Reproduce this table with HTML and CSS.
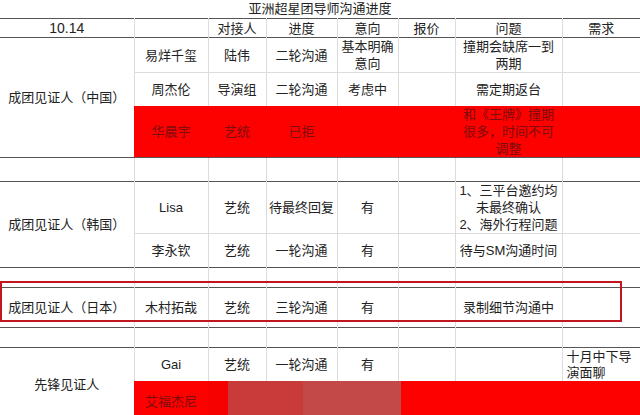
FILE: index.html
```html
<!DOCTYPE html>
<html lang="zh">
<head>
<meta charset="utf-8">
<title>亚洲超星团导师沟通进度</title>
<link rel="stylesheet" href="styles.css">
</head>
<body>
<div class="sheet">
  <div class="title">亚洲超星团导师沟通进度</div>
  <table class="grid">
    <colgroup>
      <col class="w1"><col class="w2"><col class="w3"><col class="w4"><col class="w5"><col class="w6"><col class="w7"><col class="w8">
    </colgroup>
    <tr class="dark r-head">
      <td class="g date">10.14</td><td></td><td>对接人</td><td>进度</td><td>意向</td><td>报价</td><td>问题</td><td>需求</td>
    </tr>
    <tr class="dark r35">
      <td class="g" rowspan="3">成团见证人（中国）</td>
      <td>易烊千玺</td><td>陆伟</td><td>二轮沟通</td><td>基本明确<br>意向</td><td></td><td>撞期会缺席一到<br>两期</td><td></td>
    </tr>
    <tr class="light r34">
      <td>周杰伦</td><td>导演组</td><td>二轮沟通</td><td>考虑中</td><td></td><td>需定期返台</td><td></td>
    </tr>
    <tr class="red r51">
      <td>华晨宇</td><td>艺统</td><td>已拒</td><td></td><td></td><td>和《王牌》撞期<br>很多，时间不可<br>调整</td><td></td>
    </tr>
    <tr class="dark r24">
      <td class="g"></td><td></td><td></td><td></td><td></td><td></td><td></td><td></td>
    </tr>
    <tr class="dark r51">
      <td class="g" rowspan="2">成团见证人（韩国）</td>
      <td>Lisa</td><td>艺统</td><td>待最终回复</td><td>有</td><td></td><td>1、三平台邀约均<br>未最终确认<br>2、海外行程问题</td><td></td>
    </tr>
    <tr class="light r34">
      <td>李永钦</td><td>艺统</td><td>一轮沟通</td><td>有</td><td></td><td>待与SM沟通时间</td><td></td>
    </tr>
    <tr class="dark r20">
      <td class="g"></td><td></td><td></td><td></td><td></td><td></td><td></td><td></td>
    </tr>
    <tr class="dark r40">
      <td class="g">成团见证人（日本）</td>
      <td>木村拓哉</td><td>艺统</td><td>三轮沟通</td><td>有</td><td></td><td>录制细节沟通中</td><td></td>
    </tr>
    <tr class="dark r20">
      <td class="g"></td><td></td><td></td><td></td><td></td><td></td><td></td><td></td>
    </tr>
    <tr class="dark r34">
      <td class="g" rowspan="2">先锋见证人</td>
      <td>Gai</td><td>艺统</td><td>一轮沟通</td><td>有</td><td></td><td></td><td class="note">十月中下导<br>演面聊</td>
    </tr>
    <tr class="red r35">
      <td>艾福杰尼</td>
      <td class="blur" colspan="6"><div class="mosaic"><span class="m-a"></span><span class="m-b"></span><span class="m-c"></span><span class="m-d"></span></div></td>
    </tr>
  </table>
  <div class="highlight"></div>
</div>
</body>
</html>
```

FILE: styles.css
```css
html, body {
  margin: 0;
  padding: 0;
  background: #ffffff;
}

body {
  width: 640px;
  height: 415px;
  overflow: hidden;
  font-family: "Liberation Sans", "Noto Sans CJK SC", sans-serif;
  color: #222222;
}

.sheet {
  position: relative;
  width: 640px;
}

.title {
  height: 18px;
  line-height: 18px;
  text-align: center;
  font-size: 13px;
}

.grid {
  border-collapse: collapse;
  table-layout: fixed;
  width: 640px;
  font-size: 13px;
}

.w1 { width: 134px; }
.w2 { width: 74px; }
.w3 { width: 58px; }
.w4 { width: 71px; }
.w5 { width: 61px; }
.w6 { width: 57px; }
.w7 { width: 107px; }
.w8 { width: 78px; }

.grid td {
  padding: 0;
  text-align: center;
  vertical-align: middle;
  border-left: 1px solid #dcdcdc;
  line-height: 17px;
  white-space: nowrap;
  overflow: hidden;
}

.grid td.g {
  border-left: 0;
}

.grid td.date {
  font-size: 14px;
}

.grid tr.dark {
  border-top: 1px solid #555555;
}

.grid tr.light td {
  border-top: 1px solid #dcdcdc;
}

.r-head td { height: 18px; }
.r20 td { height: 19px; }
.r24 td { height: 23px; }
.r34 td { height: 33px; }
.r35 td { height: 34px; }
.r40 td { height: 39px; }
.r51 td { height: 50px; }

.grid tr.red td {
  background: #fd0000;
  border-left-color: #fd0000;
  color: #7e0c0c;
}

.grid tr.red td.blur {
  vertical-align: top;
  border-left-color: #f60000;
}

.mosaic {
  display: flex;
  height: 40px;
}

.m-a {
  width: 19px;
  background: #f60000;
}

.m-b {
  width: 75px;
  background: #c83b3a;
}

.m-c {
  width: 98px;
  background: #c34848;
}

.m-d {
  flex: 1;
  background: #fd0000;
}

.grid td.note {
  text-align: left;
  padding-left: 4px;
  line-height: 16px;
}

.highlight {
  position: absolute;
  left: 0;
  top: 281px;
  width: 622px;
  height: 41px;
  box-sizing: border-box;
  border: 2px solid #c4161e;
}
```
